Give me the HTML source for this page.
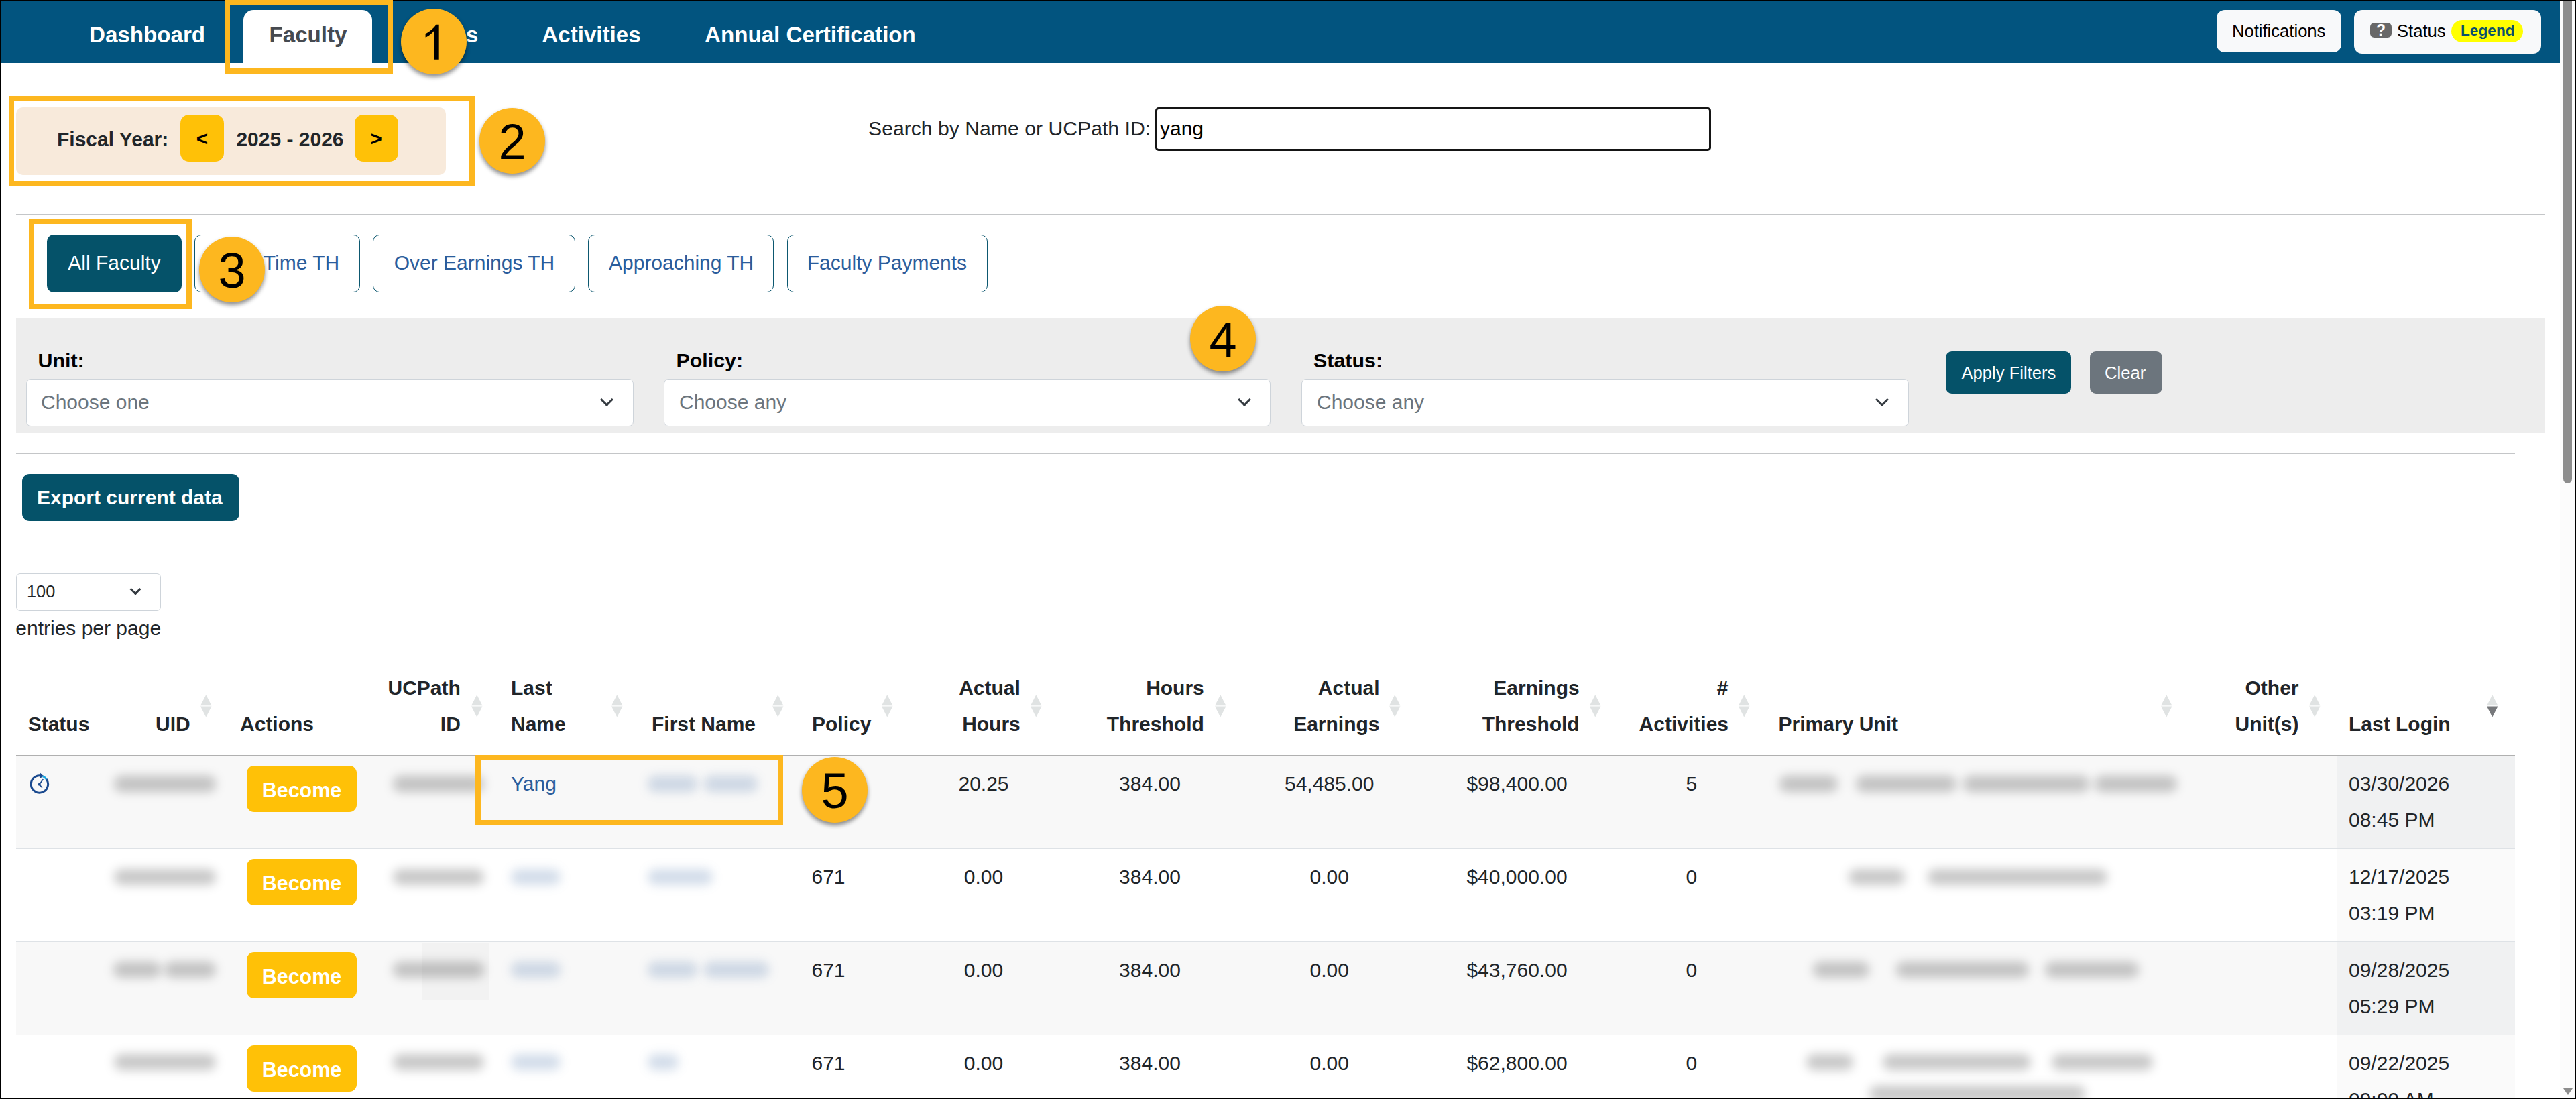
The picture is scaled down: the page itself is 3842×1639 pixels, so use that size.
<!DOCTYPE html>
<html><head><meta charset="utf-8">
<style>
*{box-sizing:border-box;margin:0;padding:0}
html,body{width:3842px;height:1639px;overflow:hidden;background:#fff}
body{position:relative;font-family:"Liberation Sans",sans-serif;color:#212529}
.a{position:absolute}
.t{position:absolute;white-space:nowrap;line-height:1}
.b{font-weight:bold}
.circ{position:absolute;width:98px;height:98px;border-radius:50%;background:#fdb71f;box-shadow:0 4px 6px rgba(0,0,0,.45);z-index:20}
.circ span{position:absolute;left:0;right:0;text-align:center;font-size:74px;line-height:1;color:#000;top:13.6px}
.box{position:absolute;border:8px solid #fdb71f;z-index:19}
.tab{position:absolute;top:350px;height:86px;border:1px solid #0d5870;border-radius:10px;background:#fff}
.sel{position:absolute;background:#fff;border:1px solid #ced4da;border-radius:7px}
.chev{position:absolute;width:14px;height:14px;border-right:3px solid #343a40;border-bottom:3px solid #343a40;transform:rotate(45deg)}
.sort{position:absolute;width:17px;height:34px}
.blob{position:absolute;filter:blur(7.5px);border-radius:12px}
.blu{color:#2b5d9c}
.bec{position:absolute;left:368px;width:164px;height:69px;background:#ffc107;border-radius:11px}
.bec span{position:absolute;left:0;right:0;text-align:center;color:#fff;font-weight:bold;font-size:30.5px;line-height:1;top:21px}
</style></head><body>

<!-- NAVBAR -->
<div class="a" style="left:0;top:0;width:3818px;height:93.5px;background:#02547f"></div>
<div class="a" style="left:363px;top:15px;width:192px;height:79px;background:#fff;border-radius:15px 15px 0 0"></div>
<div class="t b" style="left:133px;top:35.4px;font-size:33.15px;color:#fff">Dashboard</div>
<div class="t b" style="left:401.5px;top:35.4px;font-size:33.15px;color:#464a50">Faculty</div>
<div class="t b" style="left:612px;top:35.4px;font-size:33.15px;color:#fff">Forms</div>
<div class="t b" style="left:808.3px;top:35.4px;font-size:33.15px;color:#fff">Activities</div>
<div class="t b" style="left:1051px;top:35.4px;font-size:33.15px;color:#fff">Annual Certification</div>

<div class="a" style="left:3306px;top:15px;width:186px;height:63px;background:#f8f9fa;border-radius:12px"></div>
<div class="t" style="left:3329px;top:34px;font-size:25.6px;color:#000">Notifications</div>
<div class="a" style="left:3511px;top:15px;width:279px;height:65px;background:#f8f9fa;border-radius:12px"></div>
<div class="a" style="left:3535px;top:34px;width:32px;height:22px;background:#686868;border-radius:6px"></div>
<div class="t b" style="left:3535px;width:32px;text-align:center;top:33.6px;font-size:23px;color:#fff">?</div>
<div class="t" style="left:3575px;top:34px;font-size:25.6px;color:#000">Status</div>
<div class="a" style="left:3656px;top:30px;width:107px;height:33px;background:#ffff00;border-radius:17px"></div>
<div class="t b" style="left:3670px;top:34.2px;font-size:22.7px;color:#0b4f6c">Legend</div>

<!-- scrollbar -->
<div class="a" style="left:3818px;top:0;width:24px;height:1639px;background:#fcfcfc"></div>
<div class="a" style="left:3823px;top:1px;width:13px;height:720px;background:#8d8d8d;border-radius:0 0 7px 7px"></div>
<svg class="a" style="left:3822px;top:1622px" width="16" height="12"><path d="M1 1 L15 1 L8 11 Z" fill="#8d8d8d"/></svg>

<!-- FISCAL YEAR -->
<div class="a" style="left:24px;top:160px;width:641px;height:101px;background:#f8eadb;border-radius:10px"></div>
<div class="t b" style="left:85px;top:192.9px;font-size:30px">Fiscal Year:</div>
<div class="a" style="left:269px;top:171px;width:65px;height:70px;background:#ffc107;border-radius:13px"></div>
<div class="t b" style="left:292.7px;top:191.5px;font-size:29.5px;color:#000">&lt;</div>
<div class="t b" style="left:352.4px;top:192.9px;font-size:30px">2025 - 2026</div>
<div class="a" style="left:529px;top:171px;width:65px;height:70px;background:#ffc107;border-radius:13px"></div>
<div class="t b" style="left:552.5px;top:191.5px;font-size:29.5px;color:#000">&gt;</div>

<!-- SEARCH -->
<div class="t" style="left:1295px;top:177px;font-size:30.2px">Search by Name or UCPath ID:</div>
<div class="a" style="left:1722.5px;top:159.5px;width:829px;height:65px;border:3px solid #151515;border-radius:5px"></div>
<div class="t" style="left:1730px;top:177px;font-size:30px;color:#000">yang</div>

<!-- HR1 -->
<div class="a" style="left:24px;top:319px;width:3772px;height:1px;background:#c4c6c8"></div>

<!-- TABS -->
<div class="a" style="left:70px;top:350px;width:201px;height:86px;background:#055269;border-radius:10px"></div>
<div class="t" style="left:101.3px;top:377px;font-size:30px;color:#fff">All Faculty</div>
<div class="tab" style="left:290px;width:247px"></div>
<div class="t blu" style="left:320px;top:377px;font-size:30px">Over Time TH</div>
<div class="tab" style="left:556px;width:302px"></div>
<div class="t blu" style="left:587.7px;top:377px;font-size:30px">Over Earnings TH</div>
<div class="tab" style="left:877px;width:277px"></div>
<div class="t blu" style="left:908px;top:377px;font-size:30px">Approaching TH</div>
<div class="tab" style="left:1174px;width:299px"></div>
<div class="t blu" style="left:1203.7px;top:377px;font-size:30px">Faculty Payments</div>

<!-- FILTER PANEL -->
<div class="a" style="left:24px;top:474px;width:3772px;height:172px;background:#ededed"></div>
<div class="t b" style="left:56.5px;top:522px;font-size:30.4px;color:#000">Unit:</div>
<div class="t b" style="left:1008.5px;top:522px;font-size:30.4px;color:#000">Policy:</div>
<div class="t b" style="left:1959px;top:522px;font-size:30.4px;color:#000">Status:</div>
<div class="sel" style="left:39px;top:565px;width:906px;height:71px"></div>
<div class="sel" style="left:990px;top:565px;width:905px;height:71px"></div>
<div class="sel" style="left:1941px;top:565px;width:906px;height:71px"></div>
<div class="t" style="left:61px;top:585.4px;font-size:30px;color:#6c757d">Choose one</div>
<div class="t" style="left:1013px;top:585.4px;font-size:30px;color:#6c757d">Choose any</div>
<div class="t" style="left:1964px;top:585.4px;font-size:30px;color:#6c757d">Choose any</div>
<div class="chev" style="left:898px;top:589px"></div>
<div class="chev" style="left:1849px;top:589px"></div>
<div class="chev" style="left:2800px;top:589px"></div>
<div class="a" style="left:2902px;top:524px;width:187px;height:63px;background:#055269;border-radius:9px"></div>
<div class="t" style="left:2925.5px;top:544px;font-size:25.6px;color:#fff">Apply Filters</div>
<div class="a" style="left:3117px;top:524px;width:108px;height:63px;background:#6c757d;border-radius:9px"></div>
<div class="t" style="left:3139px;top:544px;font-size:25.6px;color:#fff">Clear</div>

<!-- HR2 -->
<div class="a" style="left:24px;top:676px;width:3727px;height:1px;background:#c4c6c8"></div>

<!-- EXPORT -->
<div class="a" style="left:33px;top:707px;width:324px;height:70px;background:#055269;border-radius:11px"></div>
<div class="t b" style="left:55px;top:727px;font-size:30px;color:#fff">Export current data</div>

<!-- entries -->
<div class="a" style="left:24px;top:855px;width:216px;height:56px;background:#fff;border:1px solid #ced4da;border-radius:6px"></div>
<div class="t" style="left:40px;top:870.3px;font-size:25.35px">100</div>
<div class="chev" style="left:196px;top:873px;width:12px;height:12px;border-width:0 3px 3px 0"></div>
<div class="t" style="left:23.3px;top:922px;font-size:30px">entries per page</div>

<!-- TABLE HEADER -->
<div class="t b" style="left:41.7px;top:1065.4px;font-size:30px;">Status</div>
<div class="t b" style="left:232.0px;top:1065.4px;font-size:30px;">UID</div>
<div class="t b" style="left:358.0px;top:1065.4px;font-size:30px;">Actions</div>
<div class="t b" style="right:3155.2px;top:1011.0px;font-size:30px;text-align:right;">UCPath</div>
<div class="t b" style="right:3155.2px;top:1065.4px;font-size:30px;text-align:right;">ID</div>
<div class="t b" style="left:762.0px;top:1011.0px;font-size:30px;">Last</div>
<div class="t b" style="left:762.0px;top:1065.4px;font-size:30px;">Name</div>
<div class="t b" style="left:972.0px;top:1065.4px;font-size:30px;">First Name</div>
<div class="t b" style="left:1211.0px;top:1065.4px;font-size:30px;">Policy</div>
<div class="t b" style="right:2320.2px;top:1011.0px;font-size:30px;text-align:right;">Actual</div>
<div class="t b" style="right:2320.2px;top:1065.4px;font-size:30px;text-align:right;">Hours</div>
<div class="t b" style="right:2046.2px;top:1011.0px;font-size:30px;text-align:right;">Hours</div>
<div class="t b" style="right:2046.2px;top:1065.4px;font-size:30px;text-align:right;">Threshold</div>
<div class="t b" style="right:1784.5px;top:1011.0px;font-size:30px;text-align:right;">Actual</div>
<div class="t b" style="right:1784.5px;top:1065.4px;font-size:30px;text-align:right;">Earnings</div>
<div class="t b" style="right:1486.3px;top:1011.0px;font-size:30px;text-align:right;">Earnings</div>
<div class="t b" style="right:1486.3px;top:1065.4px;font-size:30px;text-align:right;">Threshold</div>
<div class="t b" style="right:1264.5px;top:1011.0px;font-size:30px;text-align:right;">#</div>
<div class="t b" style="right:1264.0px;top:1065.4px;font-size:30px;text-align:right;">Activities</div>
<div class="t b" style="left:2652.6px;top:1065.4px;font-size:30px;">Primary Unit</div>
<div class="t b" style="right:413.5px;top:1011.0px;font-size:30px;text-align:right;">Other</div>
<div class="t b" style="right:413.5px;top:1065.4px;font-size:30px;text-align:right;">Unit(s)</div>
<div class="t b" style="left:3503.0px;top:1065.4px;font-size:30px;">Last Login</div>
<svg class="sort" style="left:299.0px;top:1035.5px" width="17" height="34"><path d="M0 16.3 L8.25 0.3 L16.5 16.3Z M0 17.5 L16.5 17.5 L8.25 33.5Z" fill="#e0e3e3"/></svg>
<svg class="sort" style="left:702.6px;top:1035.5px" width="17" height="34"><path d="M0 16.3 L8.25 0.3 L16.5 16.3Z M0 17.5 L16.5 17.5 L8.25 33.5Z" fill="#e0e3e3"/></svg>
<svg class="sort" style="left:912.0px;top:1035.5px" width="17" height="34"><path d="M0 16.3 L8.25 0.3 L16.5 16.3Z M0 17.5 L16.5 17.5 L8.25 33.5Z" fill="#e0e3e3"/></svg>
<svg class="sort" style="left:1151.5px;top:1035.5px" width="17" height="34"><path d="M0 16.3 L8.25 0.3 L16.5 16.3Z M0 17.5 L16.5 17.5 L8.25 33.5Z" fill="#e0e3e3"/></svg>
<svg class="sort" style="left:1315.0px;top:1035.5px" width="17" height="34"><path d="M0 16.3 L8.25 0.3 L16.5 16.3Z M0 17.5 L16.5 17.5 L8.25 33.5Z" fill="#e0e3e3"/></svg>
<svg class="sort" style="left:1536.6px;top:1035.5px" width="17" height="34"><path d="M0 16.3 L8.25 0.3 L16.5 16.3Z M0 17.5 L16.5 17.5 L8.25 33.5Z" fill="#e0e3e3"/></svg>
<svg class="sort" style="left:1811.5px;top:1035.5px" width="17" height="34"><path d="M0 16.3 L8.25 0.3 L16.5 16.3Z M0 17.5 L16.5 17.5 L8.25 33.5Z" fill="#e0e3e3"/></svg>
<svg class="sort" style="left:2072.0px;top:1035.5px" width="17" height="34"><path d="M0 16.3 L8.25 0.3 L16.5 16.3Z M0 17.5 L16.5 17.5 L8.25 33.5Z" fill="#e0e3e3"/></svg>
<svg class="sort" style="left:2371.0px;top:1035.5px" width="17" height="34"><path d="M0 16.3 L8.25 0.3 L16.5 16.3Z M0 17.5 L16.5 17.5 L8.25 33.5Z" fill="#e0e3e3"/></svg>
<svg class="sort" style="left:2593.0px;top:1035.5px" width="17" height="34"><path d="M0 16.3 L8.25 0.3 L16.5 16.3Z M0 17.5 L16.5 17.5 L8.25 33.5Z" fill="#e0e3e3"/></svg>
<svg class="sort" style="left:3223.0px;top:1035.5px" width="17" height="34"><path d="M0 16.3 L8.25 0.3 L16.5 16.3Z M0 17.5 L16.5 17.5 L8.25 33.5Z" fill="#e0e3e3"/></svg>
<svg class="sort" style="left:3443.8px;top:1035.5px" width="17" height="34"><path d="M0 16.3 L8.25 0.3 L16.5 16.3Z M0 17.5 L16.5 17.5 L8.25 33.5Z" fill="#e0e3e3"/></svg>
<svg class="sort" style="left:3709px;top:1035.5px" width="17" height="34"><path d="M0 16.3 L8.25 0.3 L16.5 16.3Z" fill="#e0e3e3"/><path d="M0 17.5 L16.5 17.5 L8.25 33.5Z" fill="#77797c"/></svg>
<!-- ROW 1 -->
<div class="a" style="left:24px;top:1127px;width:3727px;height:139px;background:#f8f8f8"></div>
<div class="a" style="left:3485px;top:1127px;width:266px;height:139px;background:#f0f1f2"></div>
<svg class="a" style="left:44px;top:1152px" width="32" height="34" viewBox="0 0 32 34"><path d="M 25.3 10.1 A 12.7 12.7 0 1 1 15.9 4.74" fill="none" stroke="#1b4a8f" stroke-width="3"/><path d="M 19.5 5.56 A 12.7 12.7 0 0 1 25.3 10.1" fill="none" stroke="#1ea7e1" stroke-width="3"/><path d="M15.5 0.2 L20.6 4.9 L15.5 9.4Z" fill="#1b4a8f"/><path d="M20 10.6 L14.7 17.7 L18.5 22.3" fill="none" stroke="#1b4a8f" stroke-width="1.6" stroke-linecap="round"/><circle cx="14.7" cy="17.7" r="2" fill="#1b4a8f"/></svg>
<div class="blob" style="left:170px;top:1157px;width:152px;height:24px;background:rgba(0,0,0,.214)"></div>
<div class="blob" style="left:586px;top:1157px;width:136px;height:24px;background:rgba(0,0,0,.214)"></div>
<div class="blob" style="left:2654px;top:1157px;width:87px;height:24px;background:rgba(0,0,0,.214)"></div>
<div class="blob" style="left:2768px;top:1157px;width:150px;height:24px;background:rgba(0,0,0,.214)"></div>
<div class="blob" style="left:2928px;top:1157px;width:188px;height:24px;background:rgba(0,0,0,.214)"></div>
<div class="blob" style="left:3124px;top:1157px;width:123px;height:24px;background:rgba(0,0,0,.214)"></div>
<div class="blob" style="left:966px;top:1157px;width:74px;height:24px;background:rgba(43,93,156,.206)"></div>
<div class="blob" style="left:1050px;top:1157px;width:80px;height:24px;background:rgba(43,93,156,.206)"></div>
<div class="bec" style="top:1142.3px"><span>Become</span></div>
<div class="t blu" style="left:762.0px;top:1153.9px;font-size:30px;">Yang</div>
<div class="t" style="left:1267.0px;width:400px;top:1153.9px;font-size:30px;text-align:center;">20.25</div>
<div class="t" style="left:1515.0px;width:400px;top:1153.9px;font-size:30px;text-align:center;">384.00</div>
<div class="t" style="left:1782.7px;width:400px;top:1153.9px;font-size:30px;text-align:center;">54,485.00</div>
<div class="t" style="left:2062.5px;width:400px;top:1153.9px;font-size:30px;text-align:center;">$98,400.00</div>
<div class="t" style="left:2322.8px;width:400px;top:1153.9px;font-size:30px;text-align:center;">5</div>
<div class="t" style="left:3503.0px;top:1153.9px;font-size:30px;">03/30/2026</div>
<div class="t" style="left:3503.0px;top:1207.9px;font-size:30px;">08:45 PM</div>
<!-- ROW 2 -->
<div class="a" style="left:24px;top:1266px;width:3727px;height:139px;background:#ffffff"></div>
<div class="a" style="left:3485px;top:1266px;width:266px;height:139px;background:#fafafa"></div>
<div class="a" style="left:24px;top:1265px;width:3727px;height:1px;background:#dee2e6"></div>
<div class="blob" style="left:170px;top:1296px;width:152px;height:24px;background:rgba(0,0,0,.214)"></div>
<div class="blob" style="left:586px;top:1296px;width:136px;height:24px;background:rgba(0,0,0,.214)"></div>
<div class="blob" style="left:2757px;top:1296px;width:84px;height:24px;background:rgba(0,0,0,.214)"></div>
<div class="blob" style="left:2875px;top:1296px;width:268px;height:24px;background:rgba(0,0,0,.214)"></div>
<div class="blob" style="left:762px;top:1296px;width:74px;height:24px;background:rgba(43,93,156,.206)"></div>
<div class="blob" style="left:966px;top:1296px;width:97px;height:24px;background:rgba(43,93,156,.206)"></div>
<div class="bec" style="top:1281.3px"><span>Become</span></div>
<div class="t" style="left:1210.5px;top:1292.9px;font-size:30px;">671</div>
<div class="t" style="left:1267.0px;width:400px;top:1292.9px;font-size:30px;text-align:center;">0.00</div>
<div class="t" style="left:1515.0px;width:400px;top:1292.9px;font-size:30px;text-align:center;">384.00</div>
<div class="t" style="left:1782.7px;width:400px;top:1292.9px;font-size:30px;text-align:center;">0.00</div>
<div class="t" style="left:2062.5px;width:400px;top:1292.9px;font-size:30px;text-align:center;">$40,000.00</div>
<div class="t" style="left:2322.8px;width:400px;top:1292.9px;font-size:30px;text-align:center;">0</div>
<div class="t" style="left:3503.0px;top:1292.9px;font-size:30px;">12/17/2025</div>
<div class="t" style="left:3503.0px;top:1346.9px;font-size:30px;">03:19 PM</div>
<!-- ROW 3 -->
<div class="a" style="left:24px;top:1405px;width:3727px;height:139px;background:#f8f8f8"></div>
<div class="a" style="left:3485px;top:1405px;width:266px;height:139px;background:#f0f1f2"></div>
<div class="a" style="left:24px;top:1404px;width:3727px;height:1px;background:#dee2e6"></div>
<div class="blob" style="left:169px;top:1434px;width:71px;height:24px;background:rgba(0,0,0,.214)"></div>
<div class="blob" style="left:245px;top:1434px;width:77px;height:24px;background:rgba(0,0,0,.214)"></div>
<div class="blob" style="left:586px;top:1434px;width:136px;height:24px;background:rgba(0,0,0,.214)"></div>
<div class="blob" style="left:2704px;top:1434px;width:84px;height:24px;background:rgba(0,0,0,.214)"></div>
<div class="blob" style="left:2828px;top:1434px;width:198px;height:24px;background:rgba(0,0,0,.214)"></div>
<div class="blob" style="left:3050px;top:1434px;width:140px;height:24px;background:rgba(0,0,0,.214)"></div>
<div class="blob" style="left:762px;top:1434px;width:74px;height:24px;background:rgba(43,93,156,.206)"></div>
<div class="blob" style="left:966px;top:1434px;width:74px;height:24px;background:rgba(43,93,156,.206)"></div>
<div class="blob" style="left:1050px;top:1434px;width:97px;height:24px;background:rgba(43,93,156,.206)"></div>
<div class="a" style="left:629px;top:1406px;width:101px;height:85px;background:rgba(0,0,0,.025)"></div>
<div class="bec" style="top:1420.3px"><span>Become</span></div>
<div class="t" style="left:1210.5px;top:1431.9px;font-size:30px;">671</div>
<div class="t" style="left:1267.0px;width:400px;top:1431.9px;font-size:30px;text-align:center;">0.00</div>
<div class="t" style="left:1515.0px;width:400px;top:1431.9px;font-size:30px;text-align:center;">384.00</div>
<div class="t" style="left:1782.7px;width:400px;top:1431.9px;font-size:30px;text-align:center;">0.00</div>
<div class="t" style="left:2062.5px;width:400px;top:1431.9px;font-size:30px;text-align:center;">$43,760.00</div>
<div class="t" style="left:2322.8px;width:400px;top:1431.9px;font-size:30px;text-align:center;">0</div>
<div class="t" style="left:3503.0px;top:1431.9px;font-size:30px;">09/28/2025</div>
<div class="t" style="left:3503.0px;top:1485.9px;font-size:30px;">05:29 PM</div>
<!-- ROW 4 -->
<div class="a" style="left:24px;top:1544px;width:3727px;height:139px;background:#ffffff"></div>
<div class="a" style="left:3485px;top:1544px;width:266px;height:139px;background:#fafafa"></div>
<div class="a" style="left:24px;top:1543px;width:3727px;height:1px;background:#dee2e6"></div>
<div class="blob" style="left:170px;top:1572px;width:152px;height:24px;background:rgba(0,0,0,.214)"></div>
<div class="blob" style="left:586px;top:1572px;width:136px;height:24px;background:rgba(0,0,0,.214)"></div>
<div class="blob" style="left:2694px;top:1572px;width:70px;height:24px;background:rgba(0,0,0,.214)"></div>
<div class="blob" style="left:2808px;top:1572px;width:221px;height:24px;background:rgba(0,0,0,.214)"></div>
<div class="blob" style="left:3060px;top:1572px;width:151px;height:24px;background:rgba(0,0,0,.214)"></div>
<div class="blob" style="left:762px;top:1572px;width:74px;height:24px;background:rgba(43,93,156,.206)"></div>
<div class="blob" style="left:966px;top:1572px;width:46px;height:24px;background:rgba(43,93,156,.206)"></div>
<div class="blob" style="left:2788px;top:1619px;width:322px;height:24px;background:rgba(0,0,0,.214)"></div>
<div class="bec" style="top:1559.3px"><span>Become</span></div>
<div class="t" style="left:1210.5px;top:1570.9px;font-size:30px;">671</div>
<div class="t" style="left:1267.0px;width:400px;top:1570.9px;font-size:30px;text-align:center;">0.00</div>
<div class="t" style="left:1515.0px;width:400px;top:1570.9px;font-size:30px;text-align:center;">384.00</div>
<div class="t" style="left:1782.7px;width:400px;top:1570.9px;font-size:30px;text-align:center;">0.00</div>
<div class="t" style="left:2062.5px;width:400px;top:1570.9px;font-size:30px;text-align:center;">$62,800.00</div>
<div class="t" style="left:2322.8px;width:400px;top:1570.9px;font-size:30px;text-align:center;">0</div>
<div class="t" style="left:3503.0px;top:1570.9px;font-size:30px;">09/22/2025</div>
<div class="t" style="left:3503.0px;top:1624.9px;font-size:30px;">09:09 AM</div>
<div class="a" style="left:24px;top:1126px;width:3727px;height:1px;background:#b0b0b0"></div><!-- FRAME BORDER -->
<div class="a" style="left:0;top:0;width:3842px;height:1px;background:#000;z-index:10"></div>
<div class="a" style="left:0;top:1638px;width:3842px;height:1px;background:#000;z-index:10"></div>
<div class="a" style="left:0;top:0;width:1px;height:1639px;background:#000;z-index:10"></div>
<div class="a" style="left:3841px;top:0;width:1px;height:1639px;background:#000;z-index:10"></div>

<!-- ANNOTATIONS -->
<div class="box" style="left:335px;top:0;width:251px;height:109.5px"></div>
<div class="box" style="left:13px;top:143px;width:695px;height:135px"></div>
<div class="box" style="left:43px;top:326px;width:243px;height:135px"></div>
<div class="box" style="left:709px;top:1126px;width:459px;height:105px"></div>
<div class="circ" style="left:598px;top:13px"><svg style="position:absolute;left:0;top:0" width="98" height="98"><path d="M56.7 23.7 L56.7 75.7 L49.2 75.7 L49.2 33 C46 37 41 41 36.6 42.6 L36.6 37.3 C43 34 49 29 52.5 23.7 Z" fill="#000"/></svg></div>
<div class="circ" style="left:715px;top:161px"><span>2</span></div>
<div class="circ" style="left:297px;top:353px"><span>3</span></div>
<div class="circ" style="left:1775px;top:456px"><span>4</span></div>
<div class="circ" style="left:1196px;top:1129px"><span>5</span></div>
</body></html>
